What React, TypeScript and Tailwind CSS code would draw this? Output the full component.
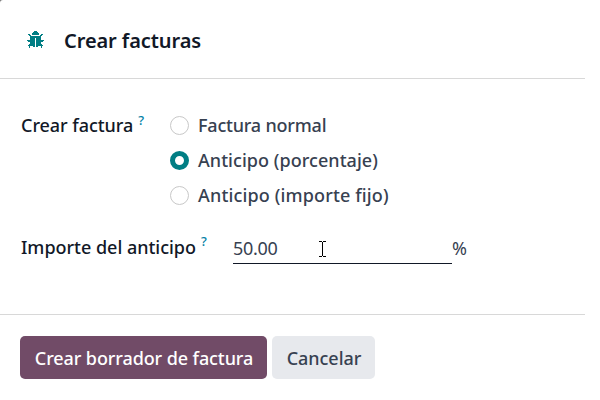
import React, { useState } from 'react';

const invoiceMethods = [
  { value: 'delivered', label: 'Factura normal', className: 'tracking-[-0.2px]' },
  { value: 'percentage', label: 'Anticipo (porcentaje)', className: 'tracking-[0.05px]' },
  { value: 'fixed', label: 'Anticipo (importe fijo)', className: 'tracking-[0.15px]' },
];

function BugIcon() {
  return (
    <svg viewBox="0 0 17 17" className="size-[17px] shrink-0 fill-[#017e84]" shapeRendering="crispEdges" aria-hidden="true">
      {/* head */}
      <path d="M7 0h3v1H7zM6 1h5v1H6zM5 2h7v2H5z" />
      {/* body halves */}
      <path d="M3 5h11v2H3zM3 7h5v9H6v-1H4v-2H3zM9 7h5v6h-1v2h-2v1H9z" />
      {/* legs */}
      <path d="M1 3h2v1H1zM14 3h2v1h-2zM2 4h2v1H2zM13 4h2v1h-2zM0 9h3v1H0zM14 9h3v1h-3zM1 10h2v1H1zM14 10h2v1h-2zM2 13h2v1H2zM13 13h2v1h-2zM1 14h3v1H1zM13 14h3v1h-3zM2 15h1v2H2zM14 15h1v2h-1z" />
    </svg>
  );
}

function TextCursor() {
  return (
    <svg viewBox="0 0 7 16" className="pointer-events-none absolute left-[86px] top-[11px] h-4 w-[7px]" shapeRendering="crispEdges">
      <path d="M0 0h3v1H0zM4 0h3v1H4zM3 1h1v14H3zM0 15h3v1H0zM4 15h3v1H4z" />
    </svg>
  );
}

function Help() {
  return <sup className="top-0 self-start text-[13px] leading-[13px] font-medium text-[#0180a5]">?</sup>;
}

export default function App() {
  const [method, setMethod] = useState('percentage');
  const [amount, setAmount] = useState('50.00');

  return (
    <div className="h-[400px] w-[600px] bg-[#777]">
      <div className="flex h-full flex-col rounded-tl-[3px] bg-white font-['Noto_Sans','Open_Sans',sans-serif] text-[18px] text-[#374151]">
        <header className="mr-[15px] flex h-[79px] shrink-0 items-center gap-[20px] border-b border-[#d8d8d8] pl-[27px]">
          <BugIcon />
          <h1 className="pt-[3px] text-[20px] leading-7 font-semibold tracking-[-0.08px] text-[#111827]">Crear facturas</h1>
        </header>

        <main className="flex h-[235px] shrink-0 flex-col pl-[21px] pt-[29px] leading-[35px]">
          <div className="flex">
            <div className="flex h-[35px] w-[149px] items-center gap-[5px] font-medium whitespace-nowrap text-[#111827]">
              <span className="tracking-[-0.05px]">Crear factura</span>
              <span className="flex h-full pt-[6px]"><Help /></span>
            </div>
            <div className="flex flex-col">
              {invoiceMethods.map((item) => (
                <label key={item.value} className="flex h-[35px] items-center gap-[9px] font-medium whitespace-nowrap">
                  <input
                    type="radio"
                    name="method"
                    checked={method === item.value}
                    onChange={() => setMethod(item.value)}
                    className="size-[19px] shrink-0 appearance-none rounded-full border border-[#c8c8c8] bg-white checked:border-[5.5px] checked:border-[#017e84]"
                  />
                  <span className={item.className}>{item.label}</span>
                </label>
              ))}
            </div>
          </div>

          <div className="mt-[17px] flex">
            <div className="flex h-[35px] w-[212px] items-center gap-[5px] font-medium whitespace-nowrap text-[#111827]">
              <span className="tracking-[-0.02px]">Importe del anticipo</span>
              <span className="flex h-full pt-[5px]"><Help /></span>
            </div>
            <div className="relative flex h-[34px]">
              <input
                value={amount}
                onChange={(e) => setAmount(e.target.value)}
                className="h-[34px] w-[219px] border-b border-[#111827] pt-[4px] tracking-[-0.3px] outline-none"
              />
              <TextCursor />
              <span className="pt-px">%</span>
            </div>
          </div>
        </main>

        <footer className="mr-[15px] flex gap-[5px] border-t border-[#d8d8d8] pl-[20px] pt-[21px] font-medium">
          <button className="h-[43px] w-[247px] rounded-[5px] bg-[#714b67] pt-[2px] pl-px tracking-[-0.1px] whitespace-nowrap text-white">
            Crear borrador de factura
          </button>
          <button className="h-[43px] w-[103px] rounded-[5px] bg-[#e7e9ed] pt-[2px] pl-px tracking-[-0.05px]">Cancelar</button>
        </footer>
      </div>
    </div>
  );
}
